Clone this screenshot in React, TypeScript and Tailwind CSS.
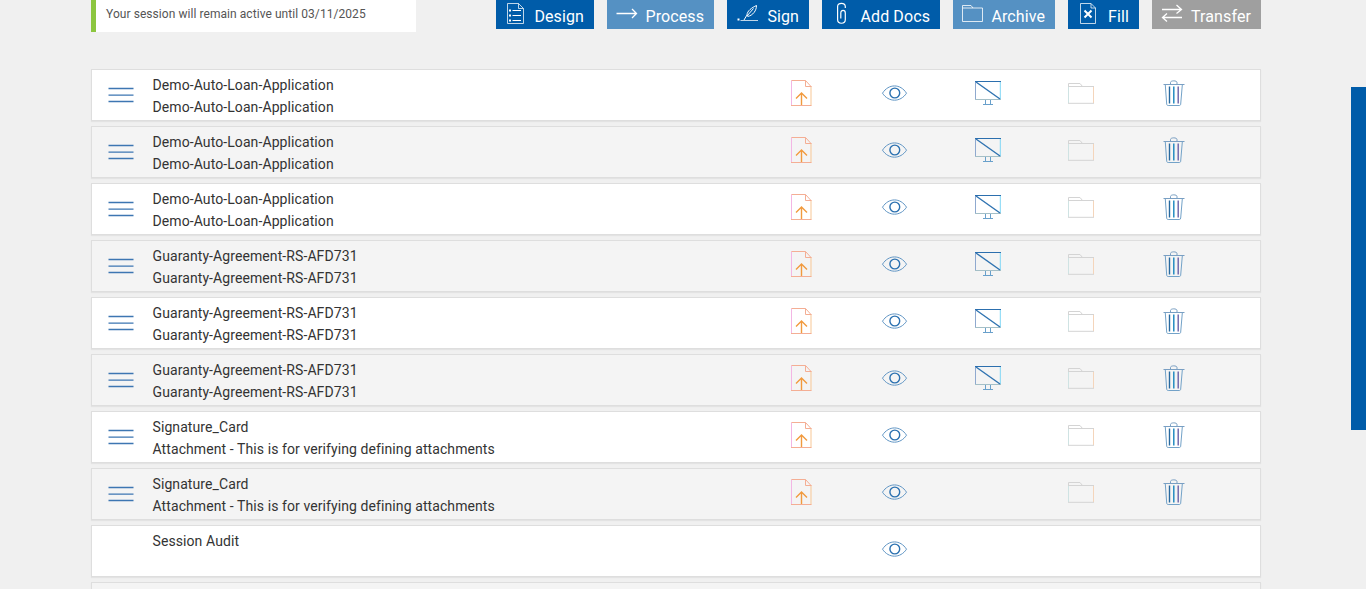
import type { ReactNode } from 'react';
import clsx from 'clsx';

interface ToolbarAction {
  label: string;
  className: string;
  icon: ReactNode;
}

interface DocumentRow {
  id: number;
  title: string;
  subtitle?: string;
  canPresent?: boolean;
  auditOnly?: boolean;
}

const actions: ToolbarAction[] = [
  {
    label: 'Design',
    className: 'w-[98px] bg-[#005ca9]',
    icon: (
      <>
        <path d="M3.5 3.5H14.5L19.5 8.5V23.5H3.5Z" opacity="0.75" />
        <path d="M14.5 3.5V8.5H19.5" opacity="0.75" />
        <path d="M8.5 10.5H17M8.5 15.5H17M8.5 20.5H17" />
        <path d="M5 10.5H7M5 15.5H7M5 20.5H7" strokeWidth="2" />
      </>
    ),
  },
  {
    label: 'Process',
    className: 'w-[107px] bg-[#5591c3]',
    icon: <path d="M1.5 13.5H21.5M17 9L21.5 13.5L17 18" strokeWidth="1.3" />,
  },
  {
    label: 'Sign',
    className: 'w-[82px] bg-[#005ca9]',
    icon: (
      <>
        <path d="M5.5 20.5H23" opacity="0.75" />
        <path d="M2.5 19.5H4.5" strokeWidth="2" />
        <path d="M9 20L12 15C12 11 17 7.5 21.5 5.5C21.5 10.5 18 15.5 12.5 16.5M12 16L18.5 8.5" />
      </>
    ),
  },
  {
    label: 'Add Docs',
    className: 'w-[118px] bg-[#005ca9]',
    icon: (
      <path
        d="M15.3 8V6.5C15.3 2.2 7.6 2.2 7.6 6.5V19.5C7.6 24.5 15.3 24.5 15.3 19.5V13C15.3 9.5 10.8 9.5 10.8 13V18.5"
        strokeWidth="1.2"
      />
    ),
  },
  {
    label: 'Archive',
    className: 'w-[102px] bg-[#5591c3]',
    icon: <path d="M1.5 21.5V5.5H10L12 8H21.5V21.5Z M1.5 8H12" opacity="0.8" />,
  },
  {
    label: 'Fill',
    className: 'w-[71px] bg-[#005ca9]',
    icon: (
      <>
        <path d="M4.5 3.5H15L19.5 8V23.5H4.5Z" opacity="0.75" />
        <path d="M15 3.5V8H19.5" opacity="0.75" />
        <path d="M8.5 10.5L15.5 17.5M15.5 10.5L8.5 17.5" strokeWidth="2" />
      </>
    ),
  },
  {
    label: 'Transfer',
    className: 'w-[109px] bg-[#9f9f9f]',
    icon: (
      <path d="M2 9.5H21.5M16.5 5L21.5 9.5L16.5 13.5M22 17.5H2.5M7 13.5L2.5 17.5L7 21.5" strokeWidth="1.3" />
    ),
  },
];

const loan = 'Demo-Auto-Loan-Application';
const guaranty = 'Guaranty-Agreement-RS-AFD731';
const attachment = 'Attachment - This is for verifying defining attachments';

const documents: DocumentRow[] = [
  { id: 1, title: loan, subtitle: loan, canPresent: true },
  { id: 2, title: loan, subtitle: loan, canPresent: true },
  { id: 3, title: loan, subtitle: loan, canPresent: true },
  { id: 4, title: guaranty, subtitle: guaranty, canPresent: true },
  { id: 5, title: guaranty, subtitle: guaranty, canPresent: true },
  { id: 6, title: guaranty, subtitle: guaranty, canPresent: true },
  { id: 7, title: 'Signature_Card', subtitle: attachment },
  { id: 8, title: 'Signature_Card', subtitle: attachment },
  { id: 9, title: 'Session Audit', auditOnly: true },
  { id: 10, title: '', auditOnly: true },
];

function RowIcon({ label, children }: { label: string; children?: ReactNode }) {
  return (
    <div className="flex w-[93px] shrink-0 justify-center pt-[9px]">
      {children ? (
        <button type="button" aria-label={label} className="h-7 w-7">
          <svg width="28" height="28" viewBox="0 0 28 28" fill="none">
            {children}
          </svg>
        </button>
      ) : null}
    </div>
  );
}

function DragHandle() {
  return (
    <svg width="26" height="16" viewBox="0 0 26 16" fill="none" stroke="#3d76b2" strokeWidth="1.3">
      <path d="M0.5 1.5H25.5M0.5 8.2H25.5M0.5 14.5H25.5" />
    </svg>
  );
}

function UploadIcon() {
  return (
    <>
      <path d="M4.5 1.5V26.5" stroke="#f3b6e4" />
      <path d="M24 7.5V26.5" stroke="#f8c795" />
      <path d="M4.5 1.5H18.5L24 7.5M18.5 1.5V7.5H24.5M4 26.5H24.5" stroke="#f4ae94" />
      <path d="M14.5 26V14M9 19.5L14.5 14L20 19.5" stroke="#f19a3e" strokeWidth="1.4" />
    </>
  );
}

function EyeIcon() {
  return (
    <>
      <path d="M2.5 14.2C8.5 4.5 20.5 4.5 26.5 14.2C20.5 23.5 8.5 23.5 2.5 14.2Z" stroke="#6196c5" />
      <circle cx="14.8" cy="14" r="4.9" stroke="#2a70b0" strokeWidth="1.4" />
    </>
  );
}

function PresentIcon() {
  return (
    <>
      <path d="M2.5 3V20.5" stroke="#8fa9cf" />
      <path d="M27.3 3V20.5" stroke="#7fd6f5" />
      <path d="M2 20.5H28" stroke="#a4bfc7" />
      <path d="M2 2.5H28" stroke="#2c6fae" />
      <path d="M3 3L27 20" stroke="#2f73b1" strokeWidth="1.4" />
      <path d="M12.5 21V25M17.5 21V25M10 25.5H20" stroke="#69a0cb" />
    </>
  );
}

function FolderIcon() {
  return (
    <>
      <path d="M2.5 7.5V24" stroke="#cfe3e3" />
      <path d="M27.5 7.5V24" stroke="#f4d5bb" />
      <path d="M2.5 8V4.5H14L16.5 7.5M2 7.5H28M2 24.3H28" stroke="#d4d4d4" />
    </>
  );
}

function TrashIcon() {
  return (
    <>
      <path d="M4.5 5.5H25.5M11.5 5V3.5C11.5 1.3 18 1.3 18 3.5V5" stroke="#799fc3" />
      <path d="M6.3 6L7.7 25C7.8 26 8.2 26.5 9.2 26.5H20.2C21.2 26.5 21.6 26 21.7 25L23.3 6" stroke="#73a2c8" />
      <path d="M10.5 7.5V24.5" stroke="#27699f" strokeWidth="1.4" />
      <path d="M14.8 7.5V24.5" stroke="#1784bd" strokeWidth="1.4" />
      <path d="M19.2 7.5V24.5" stroke="#6960a8" strokeWidth="1.4" />
    </>
  );
}

function DocumentItem({ row, striped }: { row: DocumentRow; striped: boolean }) {
  return (
    <li
      className={clsx(
        'flex h-[52px] shrink-0 border border-[#dedede] pr-[41px] shadow-[0_1px_1px_rgba(0,0,0,0.05)]',
        striped ? 'bg-[#f4f4f4]' : 'bg-white',
      )}
    >
      <div className="w-[60.5px] shrink-0 pl-4 pt-[17px]">{row.auditOnly ? null : <DragHandle />}</div>
      <div className="min-w-0 flex-1 pt-1 text-sm leading-[22px] tracking-[0.09px] text-[#333]">
        <p>{row.title}</p>
        {row.subtitle ? <p>{row.subtitle}</p> : null}
      </div>
      <RowIcon label="Upload">{row.auditOnly ? null : <UploadIcon />}</RowIcon>
      <RowIcon label="View">{row.title ? <EyeIcon /> : null}</RowIcon>
      <RowIcon label="Present">{row.canPresent ? <PresentIcon /> : null}</RowIcon>
      <RowIcon label="Archive">{row.auditOnly ? null : <FolderIcon />}</RowIcon>
      <RowIcon label="Delete">{row.auditOnly ? null : <TrashIcon />}</RowIcon>
    </li>
  );
}

export default function App() {
  return (
    <div className="flex h-[589px] w-full justify-between overflow-hidden bg-[#f0f0f0] font-['Roboto',sans-serif]">
      <main className="ml-[91px] w-[1170px]">
        <header className="flex h-[69px] items-start justify-between">
          <div className="h-8 w-[325px] border-l-5 border-[#8cc63f] bg-white pl-2.5 pt-1 text-xs leading-5 tracking-[0.06px] text-[#555]">
            Your session will remain active until 03/11/2025
          </div>
          <div className="flex gap-[13px]">
            {actions.map((action) => (
              <button
                key={action.label}
                type="button"
                className={clsx('flex h-[29px] justify-between pl-2 pr-2.5 text-white', action.className)}
              >
                <svg width="24" height="26" viewBox="0 0 24 26" fill="none" stroke="currentColor" className="shrink-0">
                  {action.icon}
                </svg>
                <span className="whitespace-nowrap pt-[5px] text-base leading-6 tracking-[0.1px]">{action.label}</span>
              </button>
            ))}
          </div>
        </header>
        <ul className="flex flex-col gap-[5px]">
          {documents.map((row, index) => (
            <DocumentItem key={row.id} row={row} striped={index % 2 === 1} />
          ))}
        </ul>
      </main>
      <aside className="mt-[87px] h-[343px] w-[15px] bg-[#005ca9]" />
    </div>
  );
}
